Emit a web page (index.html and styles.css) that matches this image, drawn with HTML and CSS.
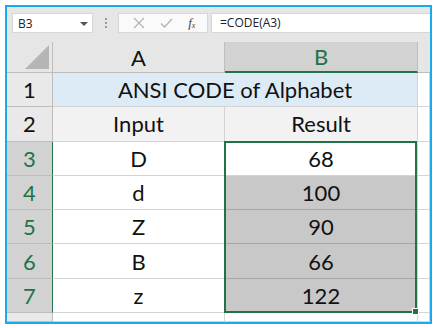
FILE: index.html
```html
<!DOCTYPE html>
<html lang="en">
  <head>
    <meta charset="UTF-8" />
    <title>CODE function</title>
    <link rel="stylesheet" href="styles.css">
  </head>
  <body>
    <div class="frame">
      <div class="toolbar">
        <div class="nameBox">
          <span>B3</span>
          <svg class="caret" width="8" height="4" viewBox="0 0 8 4"><path d="M0 0h8L4 4z" fill="#555"/></svg>
        </div>
        <div class="grip">
          <i></i><i></i><i></i>
        </div>
        <div class="fxButtons">
          <svg width="12" height="12" viewBox="0 0 12 12"><path d="M1 1l10 10M11 1L1 11" stroke="#b4b4b4" stroke-width="1.2" fill="none"/></svg>
          <svg width="13" height="12" viewBox="0 0 13 12"><path d="M1 6.5l3.5 3.5L12 2" stroke="#b4b4b4" stroke-width="1.4" fill="none"/></svg>
          <span class="fx">f<sub>x</sub></span>
        </div>
        <div class="formula">=CODE(A3)</div>
      </div>

      <div class="sheet">
        <div class="hdr corner"><span class="triangle"></span></div>
        <div class="hdr colHdr">A</div>
        <div class="hdr colHdr active">B</div>
        <div class="hdr colHdr blank"></div>

        <div class="hdr rowHdr">1</div>
        <div class="cell title">ANSI CODE of Alphabet</div>
        <div class="cell"></div>

        <div class="hdr rowHdr">2</div>
        <div class="cell label">Input</div>
        <div class="cell label">Result</div>
        <div class="cell"></div>

        <div class="hdr rowHdr active">3</div>
        <div class="cell">D</div>
        <div class="cell current">68<div class="selection"><span class="handle"></span></div></div>
        <div class="cell"></div>

        <div class="hdr rowHdr active">4</div>
        <div class="cell">d</div>
        <div class="cell picked">100</div>
        <div class="cell"></div>

        <div class="hdr rowHdr active">5</div>
        <div class="cell">Z</div>
        <div class="cell picked">90</div>
        <div class="cell"></div>

        <div class="hdr rowHdr active">6</div>
        <div class="cell">B</div>
        <div class="cell picked">66</div>
        <div class="cell"></div>

        <div class="hdr rowHdr active">7</div>
        <div class="cell">z</div>
        <div class="cell picked">122</div>
        <div class="cell"></div>

        <div class="hdr rowHdr"></div>
        <div class="cell"></div>
        <div class="cell"></div>
        <div class="cell"></div>
      </div>
    </div>
  </body>
</html>
```

FILE: styles.css
```css
body {
  margin: 0;
  background: #fff;
}
.frame {
  margin: 5px 0 0 5px;
  width: 427px;
  height: 319px;
  box-sizing: border-box;
  border: 2px solid #1aa9ec;
  background: #e6e6e6;
  display: flex;
  flex-direction: column;
  overflow: hidden;
}
.toolbar {
  display: flex;
  align-items: center;
  height: 20px;
  padding: 6px 0 9px 5px;
  font-family: "Open Sans", sans-serif;
  font-size: 12px;
  color: #222;
}
.nameBox {
  width: 81px;
  height: 20px;
  box-sizing: border-box;
  border: 1px solid #d6d6d6;
  background: #fff;
  display: flex;
  align-items: center;
  justify-content: space-between;
  padding: 0 4px 0 5px;
}
.caret {
  margin-top: 1px;
}
.grip {
  width: 25px;
  display: flex;
  flex-direction: column;
  align-items: center;
  gap: 2px;
}
.grip i {
  width: 2px;
  height: 2px;
  background: #9a9a9a;
}
.fxButtons {
  width: 90px;
  height: 20px;
  box-sizing: border-box;
  border: 1px solid #d6d6d6;
  background: #fafafa;
  display: flex;
  align-items: center;
  justify-content: space-around;
  padding: 0 4px 0 6px;
}
.fx {
  font-family: "Liberation Serif", serif;
  font-style: italic;
  font-size: 13px;
  color: #444;
}
.fx sub {
  font-size: 8px;
  vertical-align: -1px;
}
.formula {
  flex: 1;
  height: 20px;
  box-sizing: border-box;
  margin-left: 3px;
  border: 1px solid #d6d6d6;
  border-right: none;
  background: #fff;
  padding-left: 8px;
  line-height: 18px;
}
.sheet {
  flex: 1;
  display: grid;
  grid-template-columns: 46px 172px 193px 1fr;
  grid-template-rows: 31px repeat(7, 34.3px) 1fr;
  background: #fff;
  font-family: Lato, "Liberation Sans", sans-serif;
  font-size: 22px;
  color: #111;
}
.hdr,
.cell {
  box-sizing: border-box;
  display: flex;
  align-items: center;
  justify-content: center;
  border-right: 1px solid #d4d4d4;
  border-bottom: 1px solid #d4d4d4;
}
.hdr {
  background: #e6e6e6;
  border-color: #bdbdbd;
}
.corner {
  align-items: flex-end;
  justify-content: flex-end;
  padding: 0 3px 3px 0;
}
.triangle {
  width: 0;
  height: 0;
  border-left: 24px solid transparent;
  border-bottom: 24px solid #b5b5b5;
}
.colHdr.active {
  background: #d2d2d2;
  color: #217346;
  border-bottom: 2px solid #217346;
}
.colHdr.blank {
  border-right: none;
}
.rowHdr {
  background: #e9e9e9;
}
.rowHdr.active {
  background: #d2d2d2;
  color: #217346;
  border-right: 1px solid #217346;
}
.title {
  grid-column: span 2;
  background: #ddebf7;
}
.label {
  background: #f2f2f2;
}
.current {
  position: relative;
}
.picked {
  background: #c8c8c8;
  border-bottom-color: #a6a6a6;
}
.selection {
  position: absolute;
  left: -1px;
  top: -1px;
  width: calc(100% + 1px);
  height: calc(5 * 34.3px + 1px);
  box-sizing: border-box;
  border: 2px solid #217346;
  pointer-events: none;
}
.handle {
  position: absolute;
  right: -4px;
  bottom: -4px;
  width: 5px;
  height: 5px;
  background: #217346;
  border: 1px solid #fff;
}
```
